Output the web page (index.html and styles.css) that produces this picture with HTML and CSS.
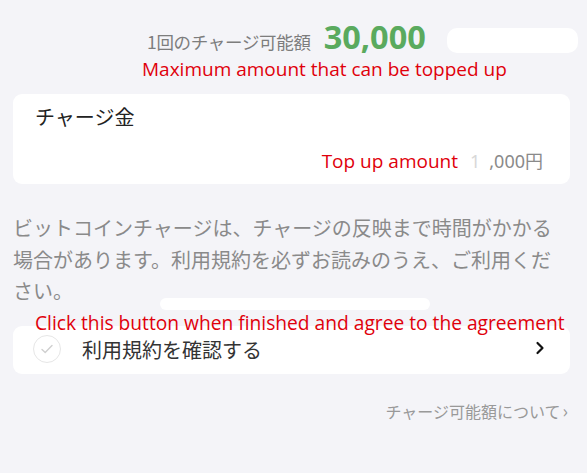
FILE: index.html
```html
<!DOCTYPE html>
<html lang="ja">
<head>
<meta charset="utf-8">
<link rel="stylesheet" href="styles.css">
</head>
<body>
<div class="page">
  <div class="limit">
    <span class="limit-label">1回のチャージ可能額</span>
    <span class="limit-value">30,000</span>
    <span class="blob blob-top"></span>
  </div>
  <div class="note note-max">Maximum amount that can be topped up</div>

  <section class="card amount-card">
    <div class="card-title">チャージ金</div>
    <div class="amount-row">
      <span class="note note-amount">Top up amount</span>
      <span class="amount"><span class="faded">1</span>,000円</span>
    </div>
  </section>

  <p class="desc">ビットコインチャージは、チャージの反映まで時間がかかる場合があります。利用規約を必ずお読みのうえ、ご利用ください。</p>

  <div class="terms-wrap">
    <span class="blob blob-mid"></span>
    <div class="note note-click">Click this button when finished and agree to the agreement</div>
    <section class="card terms-card">
      <span class="check">
        <svg width="16" height="16" viewBox="0 0 16 16"><path d="M3 8.5l3.2 3L13 4.5" fill="none" stroke="#cfcfcf" stroke-width="1.4" stroke-linecap="round" stroke-linejoin="round"/></svg>
      </span>
      <span class="terms-text">利用規約を確認する</span>
      <svg class="chev" width="10" height="14" viewBox="0 0 10 14"><path d="M2.5 2l5 5-5 5" fill="none" stroke="#111" stroke-width="2.2" stroke-linecap="round" stroke-linejoin="round"/></svg>
    </section>
  </div>

  <div class="about">チャージ可能額について<span class="about-chev">›</span></div>
</div>
</body>
</html>
```

FILE: styles.css
```css
html, body {
  margin: 0;
  padding: 0;
  background: #f4f4f8;
}
body {
  font-family: "Noto Sans CJK JP", "Noto Sans", sans-serif;
  width: 587px;
  height: 473px;
  overflow: hidden;
}
.page {
  padding: 0 17px 0 13px;
}
.limit {
  position: relative;
  display: flex;
  align-items: baseline;
  padding-left: 134px;
  padding-top: 24px;
  height: 33px;
}
.limit-label {
  font-size: 17.5px;
  line-height: 26px;
  color: #7d7d7d;
  letter-spacing: -0.3px;
}
.limit-value {
  font-family: "Open Sans", "Noto Sans", sans-serif;
  font-weight: 700;
  font-size: 32.5px;
  color: #5aaa5e;
  margin-left: 13px;
  line-height: 26px;
}
.blob {
  position: absolute;
  background: #fff;
  border-radius: 10px;
}
.blob-top {
  left: 434px;
  top: 28px;
  width: 131px;
  height: 25px;
}
.note {
  font-family: "Open Sans", "Noto Sans", sans-serif;
  color: #e0000b;
}
.note-max {
  font-size: 19px;
  padding-left: 129px;
  line-height: 20px;
  margin-top: 2px;
}
.card {
  background: #fff;
  border-radius: 9px;
}
.amount-card {
  margin-top: 15px;
  height: 90px;
  box-sizing: border-box;
  padding: 9px 27px 0 22px;
}
.card-title {
  font-size: 20px;
  color: #222;
  line-height: 28px;
}
.amount-row {
  display: flex;
  justify-content: flex-end;
  align-items: baseline;
  margin-top: 16px;
}
.note-amount {
  font-size: 19px;
  margin-right: 12px;
}
.amount {
  font-family: "Noto Sans", "Noto Sans CJK JP", sans-serif;
  font-size: 18px;
  color: #8a8a8a;
}
.faded {
  color: #d8d8d8;
  margin-right: 9px;
}
.desc {
  margin: 28px 0 0;
  width: 552px;
  font-size: 20px;
  line-height: 31.5px;
  color: #8a8a8a;
}
.terms-wrap {
  position: relative;
  margin-top: 19px;
}
.blob-mid {
  left: 147px;
  top: -28px;
  width: 270px;
  height: 12px;
  border-radius: 6px;
}
.note-click {
  position: absolute;
  left: 22px;
  top: -14px;
  font-size: 19.2px;
  line-height: 22px;
  z-index: 2;
  white-space: nowrap;
}
.terms-card {
  height: 48px;
  display: flex;
  align-items: center;
  padding: 0 25px 0 20px;
}
.check {
  width: 28px;
  height: 28px;
  border-radius: 50%;
  border: 1px solid #e6e6e6;
  box-sizing: border-box;
  display: flex;
  align-items: center;
  justify-content: center;
  margin-top: -2px;
}
.terms-text {
  font-size: 20px;
  color: #333;
  margin-left: 21px;
  flex: 1;
}
.chev {
  margin-top: -4px;
}
.about {
  text-align: right;
  margin-top: 23px;
  font-size: 16px;
  color: #999;
  padding-right: 2px;
}
.about-chev {
  font-size: 18px;
  margin-left: 2px;
}
```
